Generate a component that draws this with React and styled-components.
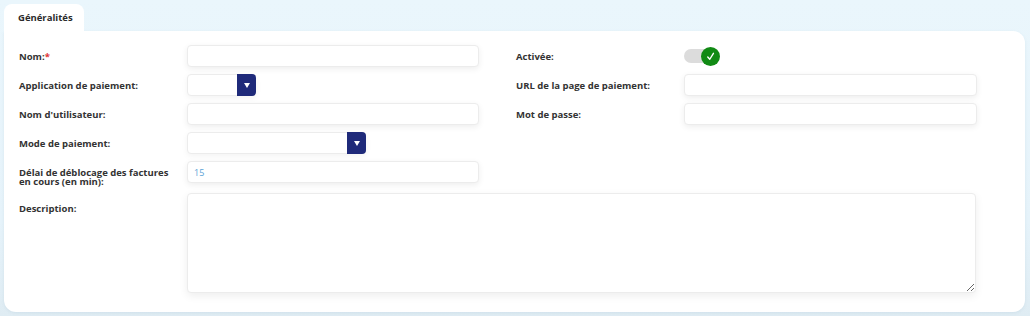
import React from 'react';
import styled, { createGlobalStyle } from 'styled-components';

const GlobalStyle = createGlobalStyle`
  html, body {
    margin: 0;
    padding: 0;
    background: #eaf6fc;
  }
  body {
    font-family: "Open Sans", "Liberation Sans", sans-serif;
  }
`;

const Page = styled.div`
  width: 1030px;
  height: 316px;
  box-sizing: border-box;
  padding: 4px 5px 5px 4px;
  background: linear-gradient(180deg, #eaf6fc 0%, #e6f3fa 70%, #dfecf3 100%);
`;

const TabBar = styled.div`
  display: flex;
`;

const Tab = styled.div`
  width: 80px;
  height: 27px;
  box-sizing: border-box;
  padding-left: 14px;
  display: flex;
  align-items: center;
  background: #fff;
  border-radius: 8px 8px 0 0;
  font-size: 9.5px;
  font-weight: 700;
  color: #2b2b2b;
`;

const Card = styled.div`
  background: #fff;
  border-radius: 0 12px 12px 12px;
  padding: 14px 15px 19px 15px;
  box-shadow: 0 1px 3px rgba(120, 160, 190, 0.15);
`;

const Grid = styled.div`
  display: grid;
  grid-template-columns: 168px 329px 168px 293px;
  row-gap: 7px;
  align-items: center;
`;

const Label = styled.label`
  font-size: 9.5px;
  font-weight: 700;
  color: #333;
  line-height: 9px;
  max-width: 158px;
  align-self: ${(p) => (p.$top ? 'start' : 'center')};
  padding-top: ${(p) => p.$pad || 0}px;
  margin-bottom: ${(p) => p.$pull || 0}px;
`;

const Required = styled.span`
  color: #e0343a;
`;

const Input = styled.input`
  box-sizing: border-box;
  width: ${(p) => p.$w || 292}px;
  height: 22px;
  border: 1px solid #ececec;
  border-radius: 4px;
  background: #fff;
  box-shadow: 0 2px 6px rgba(0, 0, 0, 0.07);
  padding: 0 6px;
  font-family: inherit;
  font-size: 9px;
  color: #5ba3d6;
  outline: none;
`;

const Select = styled.div`
  display: flex;
  width: ${(p) => p.$w}px;
  height: 22px;
  box-sizing: border-box;
  border: 1px solid #ececec;
  border-radius: 4px;
  background: #fff;
  box-shadow: 0 2px 6px rgba(0, 0, 0, 0.05);
`;

const SelectBody = styled.div`
  flex: 1;
`;

const SelectButton = styled.div`
  width: 19px;
  margin: -1px -1px -1px 0;
  background: #1f2a7a;
  border-radius: 0 4px 4px 0;
  display: flex;
  align-items: center;
  justify-content: center;
`;

const Caret = styled.span`
  width: 0;
  height: 0;
  border-left: 3.5px solid transparent;
  border-right: 3.5px solid transparent;
  border-top: 5px solid #fff;
`;

const Toggle = styled.div`
  position: relative;
  width: 36px;
  height: 19px;
  display: flex;
  align-items: center;
`;

const Track = styled.div`
  width: 34px;
  height: 14px;
  border-radius: 7px;
  background: #dcdcdc;
`;

const Knob = styled.div`
  position: absolute;
  right: 0;
  top: 0;
  width: 19px;
  height: 19px;
  border-radius: 50%;
  background: #118a14;
  display: flex;
  align-items: center;
  justify-content: center;
`;

const TextArea = styled.textarea`
  grid-column: 2 / span 3;
  box-sizing: border-box;
  width: 789px;
  height: 100px;
  margin-top: 3px;
  border: 1px solid #ececec;
  border-radius: 4px;
  box-shadow: 0 3px 8px rgba(0, 0, 0, 0.07);
  font-family: inherit;
  outline: none;
`;

const Check = () => (
  <svg width="11" height="11" viewBox="0 0 12 12">
    <path d="M3 6.5 L5.2 9 L9.2 2.5" fill="none" stroke="#fff" strokeWidth="1.5" strokeLinecap="round" strokeLinejoin="round" />
  </svg>
);

const Dropdown = ({ width }) => (
  <Select $w={width}>
    <SelectBody />
    <SelectButton>
      <Caret />
    </SelectButton>
  </Select>
);

export default function App() {
  return (
    <Page>
      <GlobalStyle />
      <TabBar>
        <Tab>Généralités</Tab>
      </TabBar>
      <Card>
        <Grid>
          <Label>Nom:<Required>*</Required></Label>
          <Input />
          <Label>Activée:</Label>
          <Toggle>
            <Track />
            <Knob><Check /></Knob>
          </Toggle>

          <Label>Application de paiement:</Label>
          <Dropdown width={69} />
          <Label>URL de la page de paiement:</Label>
          <Input $w={293} />

          <Label>Nom d'utilisateur:</Label>
          <Input />
          <Label>Mot de passe:</Label>
          <Input $w={293} />

          <Label>Mode de paiement:</Label>
          <Dropdown width={179} />
          <div />
          <div />

          <Label $top $pad={7} $pull={-6}>Délai de déblocage des factures en cours (en min):</Label>
          <Input defaultValue="15" />
          <div />
          <div />

          <Label $top $pad={14}>Description:</Label>
          <TextArea />
        </Grid>
      </Card>
    </Page>
  );
}
